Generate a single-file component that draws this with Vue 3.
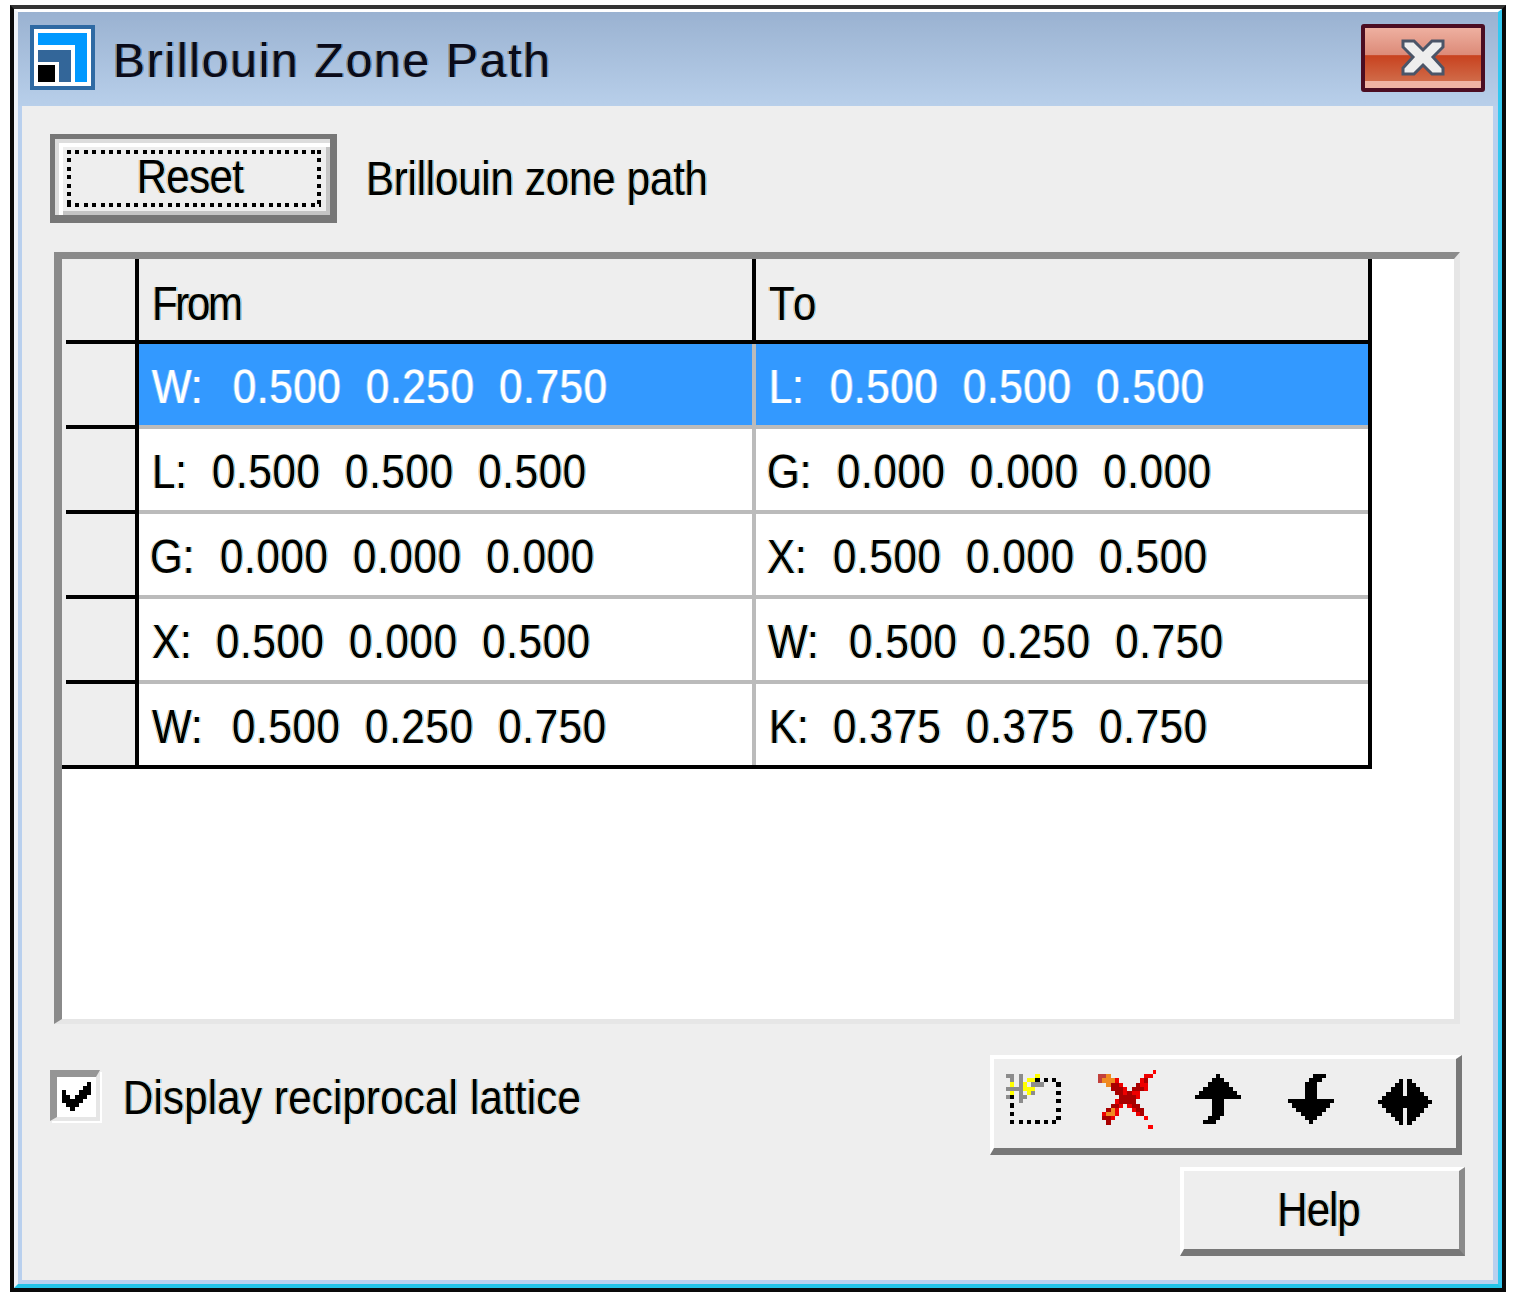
<script setup>
const rows = [
  { from: { l: 'W:', w: 81, v: ['0.500', '0.250', '0.750'] }, to: { l: 'L:', w: 61, v: ['0.500', '0.500', '0.500'] }, sel: true },
  { from: { l: 'L:', w: 60, v: ['0.500', '0.500', '0.500'] }, to: { l: 'G:', w: 70, m: -2, v: ['0.000', '0.000', '0.000'] } },
  { from: { l: 'G:', w: 70, m: -2, v: ['0.000', '0.000', '0.000'] }, to: { l: 'X:', w: 66, m: -2, v: ['0.500', '0.000', '0.500'] } },
  { from: { l: 'X:', w: 64, v: ['0.500', '0.000', '0.500'] }, to: { l: 'W:', w: 81, m: -1, v: ['0.500', '0.250', '0.750'] } },
  { from: { l: 'W:', w: 80, v: ['0.500', '0.250', '0.750'] }, to: { l: 'K:', w: 64, v: ['0.375', '0.375', '0.750'] } }
]

const palette = {
  '#': '#000000', k: '#000000', g: '#8c8c8c', y: '#ffff00',
  r: '#ee0000', d: '#a80000', o: '#f08a20', m: '#c2403c', p: '#ff0000'
}

function bitmap(name, lines) {
  const rects = []
  lines.forEach((line, y) => {
    ;[...line].forEach((c, x) => {
      if (c !== '.') rects.push({ x, y, fill: palette[c] })
    })
  })
  return { name, cols: lines[0].length, rows: lines.length, rects }
}

const tools = [
  bitmap('new', [
    'gg.g...y.....',
    '.g.g.yyk.k.k.',
    '.y.gy.ggg...k',
    'ggggyyy......',
    '.y.g.yg.....k',
    'gk.gg........',
    '...g........k',
    '.k...........',
    '............k',
    '.k...........',
    '............k',
    '.k.k.k.k.k.k.'
  ]),
  bitmap('del', [
    '.............p',
    'mmo........rr.',
    'mooor.....rd..',
    '..oddr...drr..',
    '...dddr.dddr..',
    '....ddrdrr....',
    '.....ddddr....',
    '....rdddd.....',
    '...ddr.rdd....',
    '..dor...rdd...',
    '.roor....rd...',
    '.ddr.......p..',
    '..d...........',
    '............p.'
  ]),
  bitmap('up', [
    '.....#.....',
    '....###....',
    '...#####...',
    '..#######..',
    '.#########.',
    '###########',
    '....###....',
    '....###....',
    '....###....',
    '....###....',
    '...###.....',
    '..###......'
  ]),
  bitmap('down', [
    '......###..',
    '.....###...',
    '....###....',
    '....###....',
    '....###....',
    '....###....',
    '###########',
    '.#########.',
    '..#######..',
    '...#####...',
    '....###....',
    '.....#.....'
  ]),
  bitmap('swap', [
    '.....#.#.....',
    '....##.##....',
    '...###.###...',
    '..####.####..',
    '.###########.',
    '#############',
    '.###########.',
    '..####.####..',
    '...###.###...',
    '....##.##....',
    '.....#.#.....'
  ])
]

const check = bitmap('check', [
  '......#',
  '.....##',
  '#...###',
  '##.###.',
  '#####..',
  '.###...',
  '..#....'
])

const PX = 4.2
</script>

<template>
  <div class="page">
    <div class="window">
      <div class="frame">
        <header class="title">
          <svg class="logo" viewBox="0 0 65 65" width="65" height="65">
            <rect width="65" height="65" fill="#2f6aa3" />
            <rect x="4" y="4" width="57" height="57" fill="#ffffff" />
            <rect x="8" y="8" width="49" height="49" fill="#0099ff" />
            <rect x="8" y="20" width="37" height="37" fill="#ffffff" />
            <rect x="8" y="25" width="33" height="32" fill="#336699" />
            <rect x="8" y="37" width="21" height="20" fill="#ffffff" />
            <rect x="8" y="40" width="17" height="17" fill="#000000" />
          </svg>
          <span class="title-text">Brillouin Zone Path</span>
          <div class="close">
            <svg viewBox="0 0 44 37" width="44" height="37">
              <path d="M2 2 H13 L22 11 L31 2 H42 V8 L32 18 L42 29 V35 H31 L22 26 L13 35 H2 V29 L12 18 L2 8 Z" fill="#eeeeee" stroke="#4b5568" stroke-width="3" />
            </svg>
          </div>
        </header>

        <main class="content">
          <div class="top-row">
            <div class="btn-reset">
              <div class="focus"><span class="t reset-text">Reset</span></div>
            </div>
            <span class="t zone-label">Brillouin zone path</span>
          </div>

          <div class="list">
            <div class="grid">
              <div class="row head">
                <div class="rh"></div>
                <div class="cell"><span class="t from-text">From</span></div>
                <div class="cell"><span class="t to-text">To</span></div>
              </div>
              <div v-for="(r, i) in rows" :key="i" class="row data" :class="{ sel: r.sel, last: i === rows.length - 1 }">
                <div class="rh"></div>
                <div v-for="side in ['from', 'to']" :key="side" class="cell">
                  <span class="t lab" :style="{ width: r[side].w + 'px', marginLeft: (r[side].m || 0) + 'px' }">{{ r[side].l }}</span>
                  <span v-for="(n, j) in r[side].v" :key="j" class="t num">{{ n }}</span>
                </div>
              </div>
            </div>
          </div>

          <div class="footer">
            <label class="check-row">
              <span class="box">
                <svg :width="check.cols * PX" :height="check.rows * PX" :viewBox="`0 0 ${check.cols} ${check.rows}`" shape-rendering="crispEdges">
                  <rect v-for="(p, i) in check.rects" :key="i" :x="p.x" :y="p.y" width="1.02" height="1.02" :fill="p.fill" />
                </svg>
              </span>
              <span class="t display-text">Display reciprocal lattice</span>
            </label>
            <div class="actions">
              <div class="toolbar">
                <svg v-for="icon in tools" :key="icon.name" :class="'ic-' + icon.name" :width="icon.cols * PX" :height="icon.rows * PX" :viewBox="`0 0 ${icon.cols} ${icon.rows}`" shape-rendering="crispEdges">
                  <rect v-for="(p, i) in icon.rects" :key="i" :x="p.x" :y="p.y" width="1.02" height="1.02" :fill="p.fill" />
                </svg>
              </div>
              <div class="btn-help"><span class="t help-text">Help</span></div>
            </div>
          </div>
        </main>
      </div>
    </div>
  </div>
</template>

<style>
html, body { background: #ffffff; }
</style>

<style scoped>
.page {
  padding: 5px 10px;
  width: 1516px;
  box-sizing: border-box;
  font-family: "Liberation Sans", Arial, sans-serif;
  color: #000;
}
.window {
  width: 1496px;
  height: 1287px;
  box-sizing: border-box;
  border: 4px solid #0a0a0a;
  border-top-color: #333333;
  filter: blur(0.5px);
}
.frame {
  height: 100%;
  box-sizing: border-box;
  display: flex;
  flex-direction: column;
  border-top: 3px solid #ffffff;
  border-left: 4px solid #eef2f8;
  border-right: 4px solid #33c8f0;
  border-bottom: 4px solid #22c4e8;
}
.title {
  height: 94px;
  flex: none;
  display: flex;
  align-items: center;
  padding: 0 13px 0 12px;
  background: linear-gradient(#9ab2d1, #b8cfea);
}
.logo { flex: none; margin-top: -3px; }
.title-text {
  margin: 2px 0 0 18px;
  font-size: 48px;
  letter-spacing: 1.75px;
  color: #0a0a1a;
  text-shadow: -1.5px 0 rgba(150, 90, 0, .55), 1.5px 0 rgba(0, 110, 220, .5);
}
.close {
  margin-left: auto;
  margin-top: -3px;
  width: 124px;
  height: 68px;
  box-sizing: border-box;
  border: 4px solid #4b0d22;
  border-radius: 3px;
  display: flex;
  align-items: center;
  justify-content: center;
  background: linear-gradient(#eeb0a0 0, #dc8a78 45%, #c8421f 46%, #d06a48 88%, #efb3a3 89%);
}
.content {
  flex: 1;
  min-height: 0;
  box-sizing: border-box;
  background: #eeeeee;
  border-left: 4px solid #b9d0ee;
  border-right: 5px solid #b9d0ee;
  border-bottom: 4px solid #b9d0ee;
  padding: 28px 28px 0 28px;
}
.t {
  display: inline-block;
  font-size: 42px;
  line-height: 50px;
  transform: scaleY(1.16);
  white-space: nowrap;
  text-shadow: -1.5px 0 rgba(240, 165, 60, .6), 1.5px 0 rgba(60, 185, 255, .6);
}
.top-row { display: flex; align-items: center; gap: 29px; }
.btn-reset {
  width: 287px;
  height: 89px;
  box-sizing: border-box;
  border-style: solid;
  border-width: 5px 7px 8px 5px;
  border-color: #777777;
  box-shadow: inset 4px 4px 0 #dddddd, inset 8px 8px 0 #ffffff, inset -4px -4px 0 #c4c4c4;
  padding: 11px 9px 8px 12px;
  background: #eeeeee;
}
.focus {
  height: 100%;
  box-sizing: border-box;
  display: flex;
  align-items: center;
  justify-content: center;
  padding: 0 8px 3px 0;
  background:
    repeating-linear-gradient(90deg, #000 0 4px, transparent 4px 8.4px) 0 0 / 100% 4px no-repeat,
    repeating-linear-gradient(90deg, #000 0 4px, transparent 4px 8.4px) 0 100% / 100% 4px no-repeat,
    repeating-linear-gradient(#000 0 4px, transparent 4px 8.4px) 0 0 / 4px 100% no-repeat,
    repeating-linear-gradient(#000 0 4px, transparent 4px 8.4px) 100% 0 / 4px 100% no-repeat;
}
.list {
  margin: 29px 0 0 4px;
  width: 1406px;
  height: 772px;
  box-sizing: border-box;
  background: #ffffff;
  border-style: solid;
  border-width: 7px 6px 5px 8px;
  border-color: #8a8a8a #e6e6e6 #e6e6e6 #8a8a8a;
}
.grid { width: 1310px; box-sizing: border-box; border-right: 4px solid #000; }
.row { display: flex; height: 85px; }
.rh {
  flex: none;
  width: 73px;
  border-right: 4px solid #000;
  background: linear-gradient(#000, #000) 4px 100% / 100% 4px no-repeat, #eeeeee;
}
.cell {
  flex: none;
  width: 617px;
  box-sizing: border-box;
  display: flex;
  align-items: center;
  padding-left: 13px;
  background:
    linear-gradient(#bbbbbb, #bbbbbb) 0 100% / 100% 4px no-repeat,
    linear-gradient(#bbbbbb, #bbbbbb) 100% 0 / 4px 100% no-repeat;
}
.cell:last-child { width: 612px; background: linear-gradient(#bbbbbb, #bbbbbb) 0 100% / 100% 4px no-repeat; }
.head .cell, .head .cell:last-child {
  padding-top: 4px;
  background:
    linear-gradient(#000, #000) 0 100% / 100% 4px no-repeat,
    linear-gradient(#000, #000) 100% 0 / 4px 100% no-repeat,
    #eeeeee;
}
.head .cell:last-child { background: linear-gradient(#000, #000) 0 100% / 100% 4px no-repeat, #eeeeee; }
.data.last .cell {
  background:
    linear-gradient(#000, #000) 0 100% / 100% 4px no-repeat,
    linear-gradient(#bbbbbb, #bbbbbb) 100% 0 / 4px 100% no-repeat;
}
.data.last .cell:last-child { background: linear-gradient(#000, #000) 0 100% / 100% 4px no-repeat; }
.data.last .rh { background: linear-gradient(#000, #000) 0 100% / 100% 4px no-repeat, #eeeeee; }
.sel .cell {
  background:
    linear-gradient(#bbbbbb, #bbbbbb) 0 100% / 100% 4px no-repeat,
    linear-gradient(#bbbbbb, #bbbbbb) 100% 0 / 4px 100% no-repeat,
    #3399ff;
}
.sel .cell:last-child { background: linear-gradient(#bbbbbb, #bbbbbb) 0 100% / 100% 4px no-repeat, #3399ff; }
.sel .t {
  color: #ffffff;
  text-shadow: -1px 0 rgba(130, 235, 255, .7), 1px 0 rgba(225, 190, 255, .7);
}
.lab { flex: none; }
.num { margin-right: 24.5px; letter-spacing: 0.7px; }
.from-text { letter-spacing: -2.3px; }
.to-text { letter-spacing: 3px; }
.reset-text { letter-spacing: -0.6px; }
.help-text { letter-spacing: -1px; }
.zone-label { letter-spacing: -0.2px; }
.display-text { letter-spacing: 0.2px; margin: 3px 0 0 -1px; }
.footer {
  margin-top: 31px;
  display: flex;
  justify-content: space-between;
  align-items: flex-start;
}
.check-row { display: flex; align-items: flex-start; gap: 24px; margin-top: 15px; }
.box {
  flex: none;
  width: 50px;
  height: 51px;
  box-sizing: border-box;
  display: flex;
  align-items: center;
  justify-content: center;
  background: #ffffff;
  border-style: solid;
  border-width: 7px 4px 4px 7px;
  border-color: #959595 #e6e6e6 #e6e6e6 #959595;
  box-shadow: 2px 2px 0 #ffffff;
}
.actions { display: flex; flex-direction: column; align-items: flex-end; gap: 12px; }
.toolbar {
  width: 472px;
  height: 100px;
  margin-right: 3px;
  box-sizing: border-box;
  display: flex;
  align-items: flex-start;
  padding: 15px 0 0 12px;
  border-style: solid;
  border-width: 4px 6px 7px 4px;
  border-color: #ffffff #777777 #777777 #ffffff;
}
.ic-del { margin: -4px 0 0 37px; }
.ic-up { margin-left: 39px; }
.ic-down { margin-left: 46px; }
.ic-swap { margin: 5px 0 0 44px; }
.btn-help {
  width: 285px;
  height: 89px;
  box-sizing: border-box;
  display: flex;
  align-items: center;
  justify-content: center;
  padding-right: 6px;
  border-style: solid;
  border-width: 4px 6px 7px 4px;
  border-color: #ffffff #8a8a8a #777777 #ffffff;
}
</style>
